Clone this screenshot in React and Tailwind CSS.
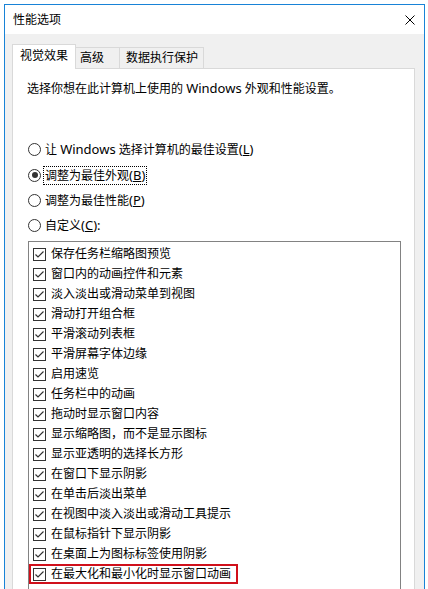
const radios = [
  { pre: "让 ", latin: "Windows", label: " 选择计算机的最佳设置", key: "L", h: "h-[26px]" },
  { label: "调整为最佳外观", key: "B", h: "h-[26px]", checked: true },
  { label: "调整为最佳性能", key: "P", h: "h-[25px]" },
  { label: "自定义", key: "C", h: "h-[25px]", tail: "):" },
];

const effects = [
  "保存任务栏缩略图预览",
  "窗口内的动画控件和元素",
  "淡入淡出或滑动菜单到视图",
  "滑动打开组合框",
  "平滑滚动列表框",
  "平滑屏幕字体边缘",
  "启用速览",
  "任务栏中的动画",
  "拖动时显示窗口内容",
  "显示缩略图，而不是显示图标",
  "显示亚透明的选择长方形",
  "在窗口下显示阴影",
  "在单击后淡出菜单",
  "在视图中淡入淡出或滑动工具提示",
  "在鼠标指针下显示阴影",
  "在桌面上为图标标签使用阴影",
  "在最大化和最小化时显示窗口动画",
];

// 西文部分在雅黑里偏大，单独放大一点
function Latin({ children }) {
  return <span className="text-[13px]">{children}</span>;
}

function Radio({ checked }) {
  return (
    <span className="w-[13px] h-[13px] rounded-full border border-[#333] bg-white flex items-center justify-center shrink-0">
      {checked && <span className="w-[6px] h-[6px] rounded-full bg-[#333]" />}
    </span>
  );
}

function CheckBox() {
  return (
    <span className="w-[13px] h-[13px] border border-[#333] bg-white shrink-0 flex items-center justify-center">
      <svg width="11" height="11" viewBox="0 0 11 11">
        <polyline points="1.5,5.5 4,8 9.5,2.5" fill="none" stroke="#333" strokeWidth="1.2" />
      </svg>
    </span>
  );
}

export default function App() {
  return (
    <div className="w-[428px] h-[589px] overflow-hidden bg-white pt-[4px] pl-[4px] font-['Noto_Sans','Noto_Sans_CJK_SC',sans-serif] text-[12px] text-black">
      <div className="w-[421px] h-[620px] border border-b-0 border-[#1883d7] bg-[#f0f0f0] flex flex-col">
        {/* 标题栏 */}
        <div className="h-[29px] bg-white flex items-center justify-between pl-[8px] pr-[9px] shrink-0">
          <span className="leading-[20px]">性能选项</span>
          <svg width="10" height="10" viewBox="0 0 10 10">
            <path d="M0.5 0.5 L9.5 9.5 M9.5 0.5 L0.5 9.5" stroke="#000" strokeWidth="1" />
          </svg>
        </div>

        {/* 选项卡 */}
        <div className="pl-[7px] pt-[9px] flex items-end h-[34px] shrink-0">
          <div className="relative z-10 w-[64px] h-[25px] bg-white border border-b-0 border-[#d9d9d9] pl-[7px] leading-[22px] -mb-px">
            视觉效果
          </div>
          <div className="w-[44px] h-[21px] border-t border-r border-[#d9d9d9] pl-[4px] leading-[20px]">
            高级
          </div>
          <div className="w-[84px] h-[21px] border-t border-r border-[#d9d9d9] pl-[6px] leading-[20px]">
            数据执行保护
          </div>
        </div>

        {/* 面板 */}
        <div className="ml-[7px] w-[403px] flex-1 bg-white border border-b-0 border-[#d9d9d9] pt-[9px]">
          <p className="pl-[14px] leading-[20px]">
            选择你想在此计算机上使用的 <Latin>Windows</Latin> 外观和性能设置。
          </p>

          <div className="mt-[37px] pl-[15px] flex flex-col">
            {radios.map((r) => (
              <div key={r.key} className={`${r.h} flex items-center gap-[3px]`}>
                <Radio checked={r.checked} />
                <span
                  className={`leading-[17px] px-px ${
                    r.checked ? "outline outline-1 outline-dotted outline-black" : ""
                  }`}
                >
                  {r.pre}
                  {r.latin && <Latin>{r.latin}</Latin>}
                  {r.label}
                  <Latin>
                    (<span className="underline">{r.key}</span>
                    {r.tail || ")"}
                  </Latin>
                </span>
              </div>
            ))}
          </div>

          <div className="ml-[15px] mt-[3px] w-[373px] h-[400px] border border-b-0 border-[#828282] pt-[2px]">
            {effects.map((e, i) => (
              <div key={e} className="relative h-[20px] flex items-center pl-[4px] gap-[5px]">
                <CheckBox />
                <span className="leading-[20px]">{e}</span>
                {i === effects.length - 1 && (
                  <span className="absolute left-0 top-0 w-[209px] h-[20px] border-[2.5px] border-[#d0101b]" />
                )}
              </div>
            ))}
          </div>
        </div>
      </div>
    </div>
  );
}
